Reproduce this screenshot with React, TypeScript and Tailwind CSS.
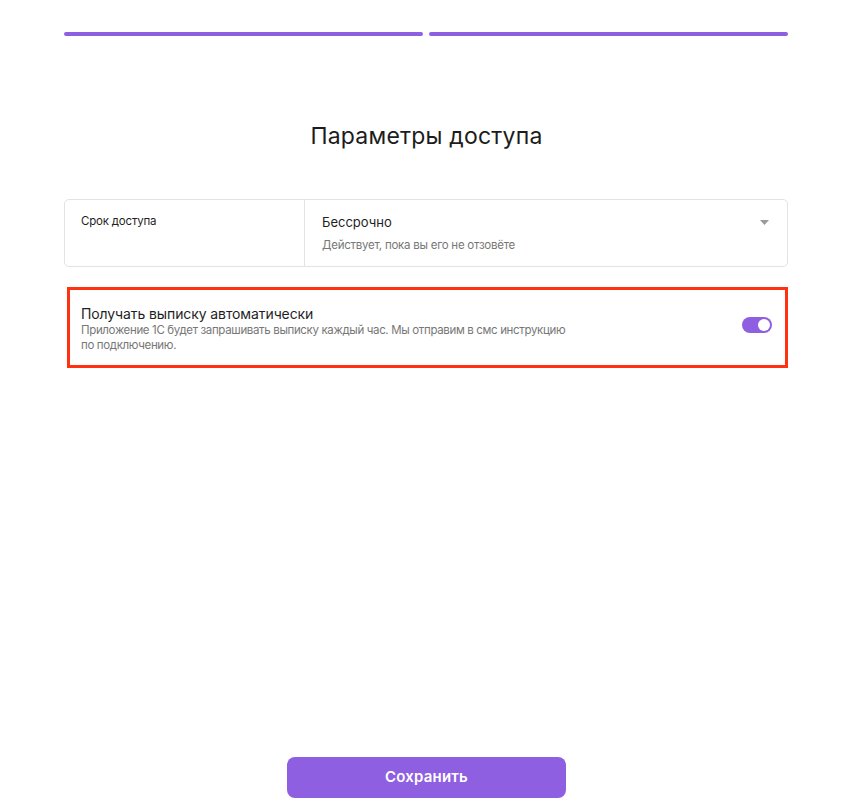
import React from "react";

export default function App() {
  return (
    <div
      className="w-[853px] h-[811px] bg-white flex flex-col px-[64px] pt-[32px] pb-[13px] text-[#1f1f1f]"
      style={{ fontFamily: "Inter, 'Noto Sans', sans-serif" }}
    >
      <div className="flex gap-[6px] w-[724px]">
        <div className="h-[4px] flex-1 rounded-full bg-[#8f5fe2]" />
        <div className="h-[4px] flex-1 rounded-full bg-[#8f5fe2]" />
      </div>

      <h1 className="mt-[84px] text-center text-[23px] leading-[32px] font-normal text-[#1c1c1c] tracking-[0.2px]">
        Параметры доступа
      </h1>

      <div className="mt-[47px] w-[724px] h-[68px] border border-[#e3e3e3] rounded-[5px] flex">
        <div className="w-[240px] border-r border-[#e3e3e3] pl-[16px] pt-[13px]">
          <div className="text-[11.5px] leading-[16px] tracking-[-0.2px] text-[#1f1f1f]">Срок доступа</div>
        </div>
        <div className="flex-1 pl-[17px] pr-[18px] pt-[13px] flex">
          <div className="flex-1 flex flex-col">
            <span className="text-[13px] leading-[18px] text-[#1f1f1f]">Бессрочно</span>
            <span className="mt-[6px] text-[11.5px] leading-[16px] tracking-[-0.25px] text-[#777]">
              Действует, пока вы его не отзовёте
            </span>
          </div>
          <svg width="9" height="6" viewBox="0 0 9 6" className="mt-[7px]">
            <path d="M0 0 H9 L4.5 5 Z" fill="#9a9a9a" />
          </svg>
        </div>
      </div>

      <div className="mt-[20px] ml-[3px] w-[721px] h-[81px] border-[3px] border-[#ff3110] flex items-center pl-[11px] pr-[13px]">
        <div className="flex-1 flex flex-col pt-[3px]">
          <span className="text-[14px] leading-[18px] tracking-[-0.1px] text-[#1f1f1f]">
            Получать выписку автоматически
          </span>
          <span className="w-[500px] text-[11.5px] leading-[15.5px] tracking-[-0.35px] text-[#777]">
            Приложение 1С будет запрашивать выписку каждый час. Мы отправим в смс инструкцию по подключению.
          </span>
        </div>
        <div className="w-[30px] h-[16px] rounded-full bg-[#8f5fe2] flex items-center justify-end pr-[2px] mt-[-6px]">
          <div className="w-[12px] h-[12px] rounded-full bg-white" />
        </div>
      </div>

      <div className="flex-1" />

      <div className="flex justify-center">
        <button className="w-[279px] h-[41px] rounded-[8px] bg-[#8f5fe2] text-white text-[15px] font-semibold tracking-[0.2px]">
          Сохранить
        </button>
      </div>
    </div>
  );
}
